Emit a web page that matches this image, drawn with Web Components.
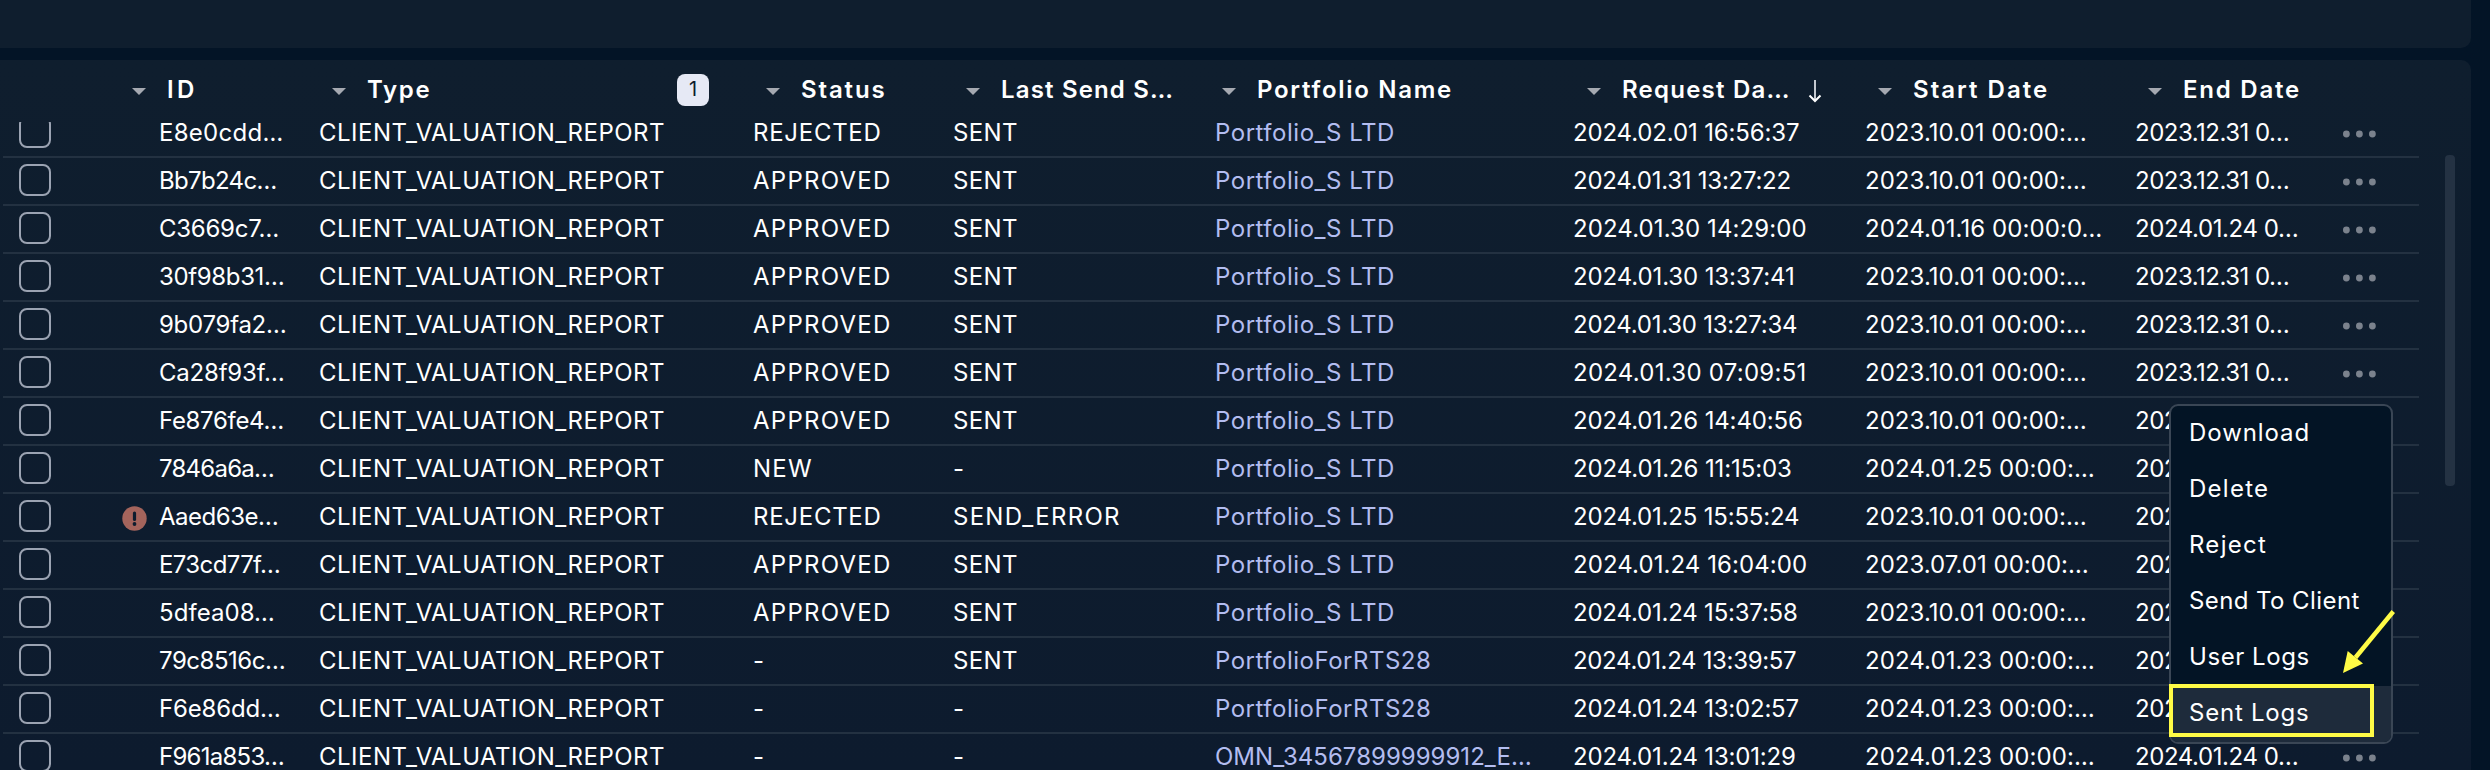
<!DOCTYPE html>
<html lang="en">
<head>
<meta charset="utf-8">
<title>Reports</title>
<style>
  body {
    margin: 0;
    background: #031426;
    overflow: hidden;
  }
</style>
</head>
<body>
<reports-page></reports-page>

<script>
const FONT = 'Inter, "Liberation Sans", sans-serif';

const makeTemplate = (html) => {
  const template = document.createElement('template');
  template.innerHTML = html;
  return template;
};

// Text run tracked so that its glyphs span the given width
const trackedTemplate = makeTemplate(`
  <style>
    :host {
      display: block;
      white-space: nowrap;
    }
  </style>
  <slot></slot>
`);

const measure = document.createElement('canvas').getContext('2d');

class TrackedText extends HTMLElement {
  constructor() {
    super();
    this.attachShadow({ mode: 'open' });
    this.shadowRoot.appendChild(trackedTemplate.content.cloneNode(true));
  }

  connectedCallback() {
    const text = this.textContent;
    const width = Number(this.getAttribute('width'));
    if (!width || text.length < 2) return;
    const style = getComputedStyle(this);
    measure.font = `${style.fontWeight} ${style.fontSize} ${FONT}`;
    const m = measure.measureText(text);
    const ink = m.actualBoundingBoxRight + m.actualBoundingBoxLeft;
    this.style.letterSpacing = `${((width - ink) / (text.length - 1)).toFixed(3)}px`;
  }
}

// Header cell
const headTemplate = makeTemplate(`
  <style>
    :host {
      display: flex;
      align-items: center;
      height: 62px;
      font-weight: 600;
    }
    .caret {
      width: 14px;
      height: 7px;
      margin: 1px 21px 0 0;
      fill: #a5a9b1;
    }
    .label {
      padding-bottom: 3px;
      line-height: 28px;
    }
    .badge {
      margin: -2px 0 0 auto;
      width: 32px;
      height: 32px;
      border-radius: 8px;
      background: #e6e9f5;
      color: #0d1c2e;
      font-size: 20px;
      font-weight: 400;
      line-height: 31px;
      text-align: center;
    }
    .sort {
      width: 14px;
      height: 24px;
      margin-left: 17px;
      fill: none;
      stroke: #fff;
      stroke-width: 2;
    }
  </style>
  <svg class="caret" viewBox="0 0 14 7"><path d="M0 0h14L7 7z"/></svg>
  <div class="label"></div>
`);

class HeadCell extends HTMLElement {
  constructor() {
    super();
    this.attachShadow({ mode: 'open' });
    this.shadowRoot.appendChild(headTemplate.content.cloneNode(true));
  }

  connectedCallback() {
    this.shadowRoot.querySelector('.label').innerHTML =
      `<tracked-text width="${this.getAttribute('width')}">${this.getAttribute('label')}</tracked-text>`;
    if (this.hasAttribute('count')) {
      const badge = document.createElement('div');
      badge.className = 'badge';
      badge.textContent = this.getAttribute('count');
      this.shadowRoot.appendChild(badge);
    }
    if (this.hasAttribute('sorted')) {
      this.shadowRoot.appendChild(makeTemplate(`
        <svg class="sort" viewBox="0 0 14 24">
          <path d="M7 1v20" stroke="#c3c8cf"/><path d="M1.5 16.5L7 22l5.5-5.5"/>
        </svg>`).content);
    }
  }
}

// Table row
const rowTemplate = makeTemplate(`
  <style>
    :host {
      display: grid;
      grid-template-columns: 119px 37px 160px 434px 200px 262px 358px 292px 270px 208px 76px;
      height: 46px;
      line-height: 46px;
      border-bottom: 2px solid #233141;
    }
    .check {
      box-sizing: border-box;
      width: 32px;
      height: 32px;
      margin: 6px 0 0 16px;
      border: 2px solid #9ba3b2;
      border-radius: 8px;
    }
    .alert svg {
      display: block;
      width: 25px;
      height: 25px;
      margin-top: 12px;
    }
    .link {
      color: #b3bdf0;
    }
    .more {
      display: block;
      width: 34px;
      height: 8px;
      margin-top: 20px;
      fill: #7b828d;
    }
  </style>
  <div class="check"></div>
  <div class="alert"></div>
`);

const ALERT_ICON = `
  <svg viewBox="0 0 25 25">
    <circle cx="12.5" cy="12.5" r="12.2" fill="#a4645c"/>
    <path d="M12.5 7v6.5" stroke="#0d1c2e" stroke-width="3.2" stroke-linecap="round"/>
    <circle cx="12.5" cy="18" r="1.9" fill="#0d1c2e"/>
  </svg>`;

class ReportRow extends HTMLElement {
  constructor() {
    super();
    this.attachShadow({ mode: 'open' });
    this.shadowRoot.appendChild(rowTemplate.content.cloneNode(true));
  }

  set report(cells) {
    if (this.hasAttribute('failed')) {
      this.shadowRoot.querySelector('.alert').innerHTML = ALERT_ICON;
    }
    cells.forEach(([text, width], i) => {
      const cell = document.createElement('tracked-text');
      cell.textContent = text;
      cell.setAttribute('width', width);
      if (i === 4) cell.className = 'link';
      this.shadowRoot.appendChild(cell);
    });
    this.shadowRoot.appendChild(makeTemplate(`
      <svg class="more" viewBox="0 0 34 8">
        <circle cx="3.4" cy="4" r="3.4"/><circle cx="16.4" cy="4" r="3.4"/><circle cx="29.4" cy="4" r="3.4"/>
      </svg>`).content);
  }
}

// Row actions menu
const menuTemplate = makeTemplate(`
  <style>
    :host {
      display: block;
      box-sizing: border-box;
      width: 224px;
      height: 340px;
      border: 2px solid #3a4655;
      border-radius: 9px;
      background: #031425;
      overflow: hidden;
    }
    .item {
      box-sizing: border-box;
      height: 56px;
      padding-left: 18px;
      line-height: 54px;
    }
    .item.active {
      background: #1e2b3b;
    }
  </style>
`);

const ACTIONS = [
  ['Download', 116.5],
  ['Delete', 76],
  ['Reject', 75],
  ['Send To Client', 169.5],
  ['User Logs', 117.5],
  ['Sent Logs', 118],
];

class ActionMenu extends HTMLElement {
  constructor() {
    super();
    this.attachShadow({ mode: 'open' });
    this.shadowRoot.appendChild(menuTemplate.content.cloneNode(true));
    ACTIONS.forEach(([label, width]) => {
      const item = document.createElement('div');
      item.className = label === 'Sent Logs' ? 'item active' : 'item';
      item.innerHTML = `<tracked-text width="${width}">${label}</tracked-text>`;
      this.shadowRoot.appendChild(item);
    });
  }
}

// Page
const TYPE = ['CLIENT_VALUATION_REPORT', 344];
const APPROVED = ['APPROVED', 136];
const REJECTED = ['REJECTED', 124.5];
const SENT = ['SENT', 63];
const NONE = ['-', 0];
const LTD = ['Portfolio_S LTD', 176];
const RTS = ['PortfolioForRTS28', 213];
const OCT = ['2023.10.01 00:00:…', 219];
const JAN23 = ['2024.01.23 00:00:…', 227];
const DEC = ['2023.12.31 0…', 152];
const JAN24 = ['2024.01.24 0…', 161];

const REPORTS = [
  [['E8e0cdd…', 120.5], TYPE, REJECTED, SENT, LTD, ['2024.02.01 16:56:37', 225], OCT, DEC],
  [['Bb7b24c…', 114.5], TYPE, APPROVED, SENT, LTD, ['2024.01.31 13:27:22', 215.5], OCT, DEC],
  [['C3669c7…', 117.5], TYPE, APPROVED, SENT, LTD, ['2024.01.30 14:29:00', 231.5], ['2024.01.16 00:00:0…', 234.5], JAN24],
  [['30f98b31…', 123], TYPE, APPROVED, SENT, LTD, ['2024.01.30 13:37:41', 219], OCT, DEC],
  [['9b079fa2…', 125], TYPE, APPROVED, SENT, LTD, ['2024.01.30 13:27:34', 223], OCT, DEC],
  [['Ca28f93f…', 123], TYPE, APPROVED, SENT, LTD, ['2024.01.30 07:09:51', 230.5], OCT, DEC],
  [['Fe876fe4…', 121.5], TYPE, APPROVED, SENT, LTD, ['2024.01.26 14:40:56', 228], OCT, DEC],
  [['7846a6a…', 113], TYPE, ['NEW', 57], NONE, LTD, ['2024.01.26 11:15:03', 217], ['2024.01.25 00:00:…', 227], DEC],
  [['Aaed63e…', 118], TYPE, REJECTED, ['SEND_ERROR', 165], LTD, ['2024.01.25 15:55:24', 225], OCT, DEC],
  [['E73cd77f…', 118], TYPE, APPROVED, SENT, LTD, ['2024.01.24 16:04:00', 232], ['2023.07.01 00:00:…', 221], DEC],
  [['5dfea08…', 113], TYPE, APPROVED, SENT, LTD, ['2024.01.24 15:37:58', 223], OCT, DEC],
  [['79c8516c…', 124], TYPE, NONE, SENT, RTS, ['2024.01.24 13:39:57', 222], JAN23, JAN24],
  [['F6e86dd…', 118], TYPE, NONE, NONE, RTS, ['2024.01.24 13:02:57', 224.5], JAN23, JAN24],
  [['F961a853…', 122], TYPE, NONE, NONE, ['OMN_34567899999912_E…', 314], ['2024.01.24 13:01:29', 221], JAN23, JAN24],
];

const pageTemplate = makeTemplate(`
  <style>
    :host {
      display: flex;
      flex-direction: column;
      gap: 12px;
      position: relative;
      width: 2490px;
      height: 770px;
      overflow: hidden;
      color: #fff;
      font: 400 24px ${FONT};
    }
    .filters {
      width: 2471px;
      height: 48px;
      border-radius: 0 0 10px 0;
      background: #0f1e2e;
    }
    .table {
      width: 2471px;
      height: 710px;
      border-radius: 0 10px 0 0;
      background: linear-gradient(#0f1e2e, #0d1b2e);
    }
    header {
      display: grid;
      grid-template-columns: 200px 377px 57px 200px 256px 365px 291px 270px 200px;
      padding-left: 132px;
      height: 62px;
    }
    head-cell:nth-child(3) {
      grid-column: 4;
    }
    .body {
      display: flex;
      justify-content: space-between;
      height: 648px;
    }
    .rows {
      display: flex;
      flex-direction: column;
      width: 2416px;
      margin-left: 3px;
      overflow: hidden;
    }
    report-row {
      flex: none;
    }
    /* the list is scrolled a little, its first row is cut by the header */
    report-row:first-child {
      margin-top: -12px;
    }
    .thumb {
      width: 10px;
      height: 331px;
      margin: 33px 16px 0 0;
      border-radius: 4px;
      background: #243243;
    }
    action-menu {
      position: absolute;
      left: 2169px;
      top: 404px;
    }
    .highlight {
      position: absolute;
      left: 2169px;
      top: 684px;
      box-sizing: border-box;
      width: 205px;
      height: 53px;
      border: 4px solid #fffb46;
    }
    .pointer {
      position: absolute;
      left: 2340px;
      top: 608px;
      width: 60px;
      height: 70px;
    }
  </style>
  <div class="filters"></div>
  <div class="table">
    <header>
      <head-cell label="ID" width="26"></head-cell>
      <head-cell label="Type" width="62.5" count="1"></head-cell>
      <head-cell label="Status" width="82.5"></head-cell>
      <head-cell label="Last Send S…" width="169"></head-cell>
      <head-cell label="Portfolio Name" width="193"></head-cell>
      <head-cell label="Request Da…" width="164.5" sorted></head-cell>
      <head-cell label="Start Date" width="133"></head-cell>
      <head-cell label="End Date" width="115"></head-cell>
    </header>
    <div class="body">
      <div class="rows"></div>
      <div class="thumb"></div>
    </div>
  </div>
  <action-menu></action-menu>
  <div class="highlight"></div>
  <svg class="pointer" viewBox="0 0 60 70">
    <path d="M53.3 3.5L15.5 49.5" stroke="#fffb46" stroke-width="4.5"/>
    <path d="M3 65L7.7 43L23 55.5z" fill="#fffb46"/>
  </svg>
`);

class ReportsPage extends HTMLElement {
  constructor() {
    super();
    this.attachShadow({ mode: 'open' });
    this.shadowRoot.appendChild(pageTemplate.content.cloneNode(true));
  }

  connectedCallback() {
    const rows = this.shadowRoot.querySelector('.rows');
    REPORTS.forEach((report) => {
      const row = document.createElement('report-row');
      if (report[3][0] === 'SEND_ERROR') row.setAttribute('failed', '');
      rows.appendChild(row);
      row.report = report;
    });
  }
}

window.customElements.define('tracked-text', TrackedText);
window.customElements.define('head-cell', HeadCell);
window.customElements.define('report-row', ReportRow);
window.customElements.define('action-menu', ActionMenu);
window.customElements.define('reports-page', ReportsPage);
</script>
</body>
</html>
